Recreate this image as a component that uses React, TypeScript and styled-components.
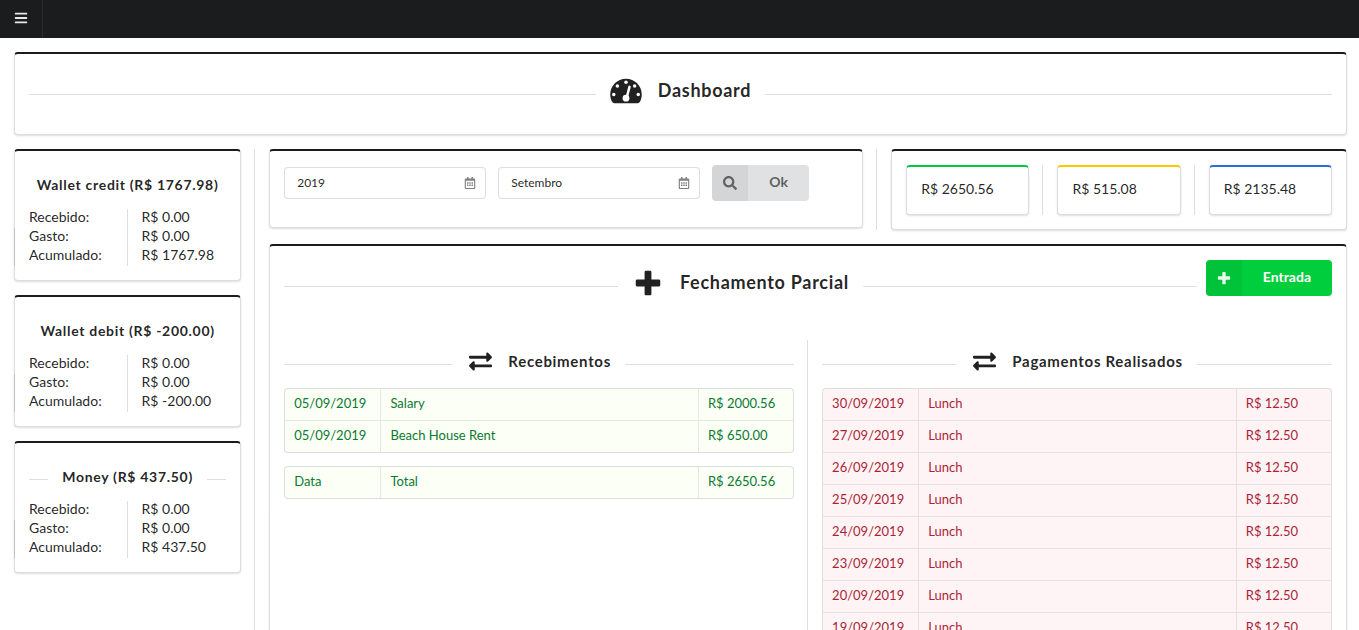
import React from "react";
import styled, { createGlobalStyle, css } from "styled-components";
import { FaBars, FaExchangeAlt, FaRegCalendarAlt, FaSearch } from "react-icons/fa";

const line = "rgba(34, 36, 38, 0.15)";

const GlobalStyle = createGlobalStyle`
  *, *::before, *::after { box-sizing: border-box; }
  body {
    margin: 0;
    background: #fff;
    color: rgba(0, 0, 0, 0.87);
    font-family: Lato, "Open Sans", sans-serif;
    font-size: 14px;
    line-height: 19px;
    overflow-x: hidden;
  }
`;

const Menu = styled.nav`
  display: flex;
  height: 38px;
  background: #1b1c1d;
`;

const MenuButton = styled.button`
  display: flex;
  align-items: center;
  justify-content: center;
  width: 43px;
  padding: 0 0 2px;
  border: 0;
  border-right: 1px solid rgba(255, 255, 255, 0.08);
  background: transparent;
  color: rgba(255, 255, 255, 0.9);
  font-size: 14px;
  cursor: pointer;
`;

const Page = styled.main`
  display: flex;
  flex-direction: column;
  gap: 14px;
  margin-right: -2px;
  padding: 14px 0;
`;

const PageHeader = styled.header`
  padding: 0 14px;
`;

const Segment = styled.section<{ $accent?: string }>`
  padding: 14px;
  border: 1px solid ${line};
  border-top: 2px solid ${(p) => p.$accent ?? "#1b1c1d"};
  border-radius: 4px;
  background: #fff;
  box-shadow: 0 1px 2px 0 ${line};
`;

const Columns = styled.div<{ $template: string; $nested?: boolean }>`
  display: grid;
  grid-template-columns: ${(p) => p.$template};
  margin: 0 ${(p) => (p.$nested ? "-14px" : "0")};
`;

const Column = styled.div<{ $gap?: number }>`
  display: flex;
  flex-direction: column;
  gap: ${(p) => p.$gap ?? 0}px;
  min-width: 0;
  padding: 0 14px;

  &:not(:last-child) {
    border-right: 1px solid ${line};
    padding-right: 13px;
  }
`;

const Value = styled.span`
  display: block;
  padding-bottom: 4px;
  line-height: 15px;
`;

const HeadingText = styled.span`
  display: flex;
  flex: none;
  align-items: center;
  padding: 0 14px;
`;

const headingSizes = {
  large: css`
    height: 52px;
    padding-bottom: 8px;
    &::before, &::after { margin-top: 8px; }
    ${HeadingText} { gap: 16px; font-size: 18px; }
    svg { width: 32px; height: 28px; margin-top: 2px; }
  `,
  medium: css`
    height: 48px;
    padding-bottom: 6px;
    &::before, &::after { margin-top: 6px; }
    ${HeadingText} { gap: 14px; font-size: 15px; }
    svg { width: 27px; height: 23px; }
  `,
  small: css`
    height: 44px;
    padding-bottom: 6px;
    &::before, &::after { margin-top: 6px; }
  `,
};

const Heading = styled.h2<{ $size: keyof typeof headingSizes }>`
  display: flex;
  align-items: center;
  justify-content: center;
  margin: 0;
  font-size: 14px;
  font-weight: 700;
  letter-spacing: 0.05em;
  white-space: nowrap;

  &::before,
  &::after {
    content: "";
    flex: 1;
    height: 1px;
    background: ${line};
  }

  ${(p) => headingSizes[p.$size]}
`;

const WalletStats = styled.div`
  position: relative;

  &::before {
    content: "";
    position: absolute;
    left: -15px;
    bottom: 0;
    width: 1px;
    height: 38px;
    background: ${line};
  }
`;

const FilterForm = styled.form`
  display: flex;
  align-items: center;
  gap: 12px;
  margin-bottom: 12px;
`;

const Field = styled.label`
  position: relative;
  display: flex;
  flex: 0 1 202px;
  min-width: 0;

  svg {
    position: absolute;
    top: 10px;
    right: 10px;
    width: 12px;
    height: 12px;
    color: rgba(0, 0, 0, 0.5);
  }
`;

const TextInput = styled.input`
  width: 100%;
  height: 32px;
  padding: 0 32px 2px 12px;
  border: 1px solid ${line};
  border-radius: 4px;
  background: #fff;
  color: rgba(0, 0, 0, 0.87);
  font: 12px Lato, "Open Sans", sans-serif;
`;

const IconButton = styled.button<{ $green?: boolean }>`
  display: flex;
  flex: none;
  height: 36px;
  padding: 0;
  border: 0;
  border-radius: 4px;
  overflow: hidden;
  background: ${(p) => (p.$green ? "#00ce3d" : "#e0e1e2")};
  color: ${(p) => (p.$green ? "#fff" : "rgba(0, 0, 0, 0.6)")};
  font: 700 14px/34px Lato, "Open Sans", sans-serif;
  cursor: pointer;
`;

const ButtonIcon = styled.span`
  display: flex;
  align-items: center;
  justify-content: center;
  width: 36px;
  height: 36px;
  background: rgba(0, 0, 0, 0.05);

  svg {
    width: 14px;
    height: 14px;
    opacity: 0.9;
  }
`;

const ButtonText = styled.span`
  padding: 0 21px;
`;

const TitleRow = styled.div`
  display: flex;
  align-items: flex-start;
  gap: 9px;
  margin-bottom: 28px;

  ${Heading} { flex: 1; }
`;

const Tables = styled.div`
  display: flex;
  flex-direction: column;
  gap: 13px;
`;

const Table = styled.table<{ $negative?: boolean }>`
  width: 100%;
  border: 1px solid ${line};
  border-radius: 4px;
  border-spacing: 0;
  table-layout: fixed;
  overflow: hidden;
  background: ${(p) => (p.$negative ? "#fff4f5" : "#fcfff5")};
  background-clip: padding-box;
  color: ${(p) => (p.$negative ? "#ac1f36" : "#0a7a32")};
  font-size: 13px;

  col:first-child,
  col:last-child {
    width: calc(100% * 3 / 16);
  }

  td {
    height: 31px;
    padding: 0 9px 4px;
    line-height: 18px;
  }

  td + td { border-left: 1px solid rgba(34, 36, 38, 0.1); }
  tr + tr td { border-top: 1px solid rgba(34, 36, 38, 0.1); height: 32px; }
`;

const wallets = [
  { name: "Wallet credit", balance: "R$ 1767.98" },
  { name: "Wallet debit", balance: "R$ -200.00" },
  { name: "Money", balance: "R$ 437.50" },
];

const totals = [
  { value: "R$ 2650.56", color: "#00c746" },
  { value: "R$ 515.08", color: "#fbc800" },
  { value: "R$ 2135.48", color: "#2b70d6" },
];

const receipts = [
  ["05/09/2019", "Salary", "R$ 2000.56"],
  ["05/09/2019", "Beach House Rent", "R$ 650.00"],
];

const payments = [30, 27, 26, 25, 24, 23, 20, 19].map((day) => [
  `${day}/09/2019`,
  "Lunch",
  "R$ 12.50",
]);

function PlusIcon() {
  return (
    <svg viewBox="0 0 448 512" fill="currentColor" aria-hidden="true">
      <path d="M448 294.2v-76.4c0-13.3-10.7-24-24-24H286.2V56c0-13.3-10.7-24-24-24h-76.4c-13.3 0-24 10.7-24 24v137.8H24c-13.3 0-24 10.7-24 24v76.4c0 13.3 10.7 24 24 24h137.8V456c0 13.3 10.7 24 24 24h76.4c13.3 0 24-10.7 24-24V318.2H424c13.3 0 24-10.7 24-24z" />
    </svg>
  );
}

function GaugeIcon() {
  return (
    <svg viewBox="0 0 576 512" fill="currentColor" aria-hidden="true">
      <path d="M76 480a48 48 0 0 1-43-26C12 414 0 369 0 320 0 161 129 32 288 32s288 129 288 288c0 49-12 94-33 134a48 48 0 0 1-43 26H76z" />
      <g fill="#fff">
        <circle cx="64" cy="320" r="32" />
        <circle cx="130" cy="166" r="32" />
        <circle cx="288" cy="98" r="32" />
        <circle cx="446" cy="166" r="32" />
        <circle cx="512" cy="320" r="32" />
        <circle cx="288" cy="388" r="62" />
      </g>
      <path d="M352 180L300 380" fill="none" stroke="#fff" strokeWidth="46" strokeLinecap="round" />
    </svg>
  );
}

function Entries({ rows, negative, label }: { rows: string[][]; negative?: boolean; label: string }) {
  return (
    <Table $negative={negative} aria-label={label}>
      <colgroup>
        <col />
        <col />
        <col />
      </colgroup>
      <tbody>
        {rows.map((row, i) => (
          <tr key={i}>
            {row.map((cell, j) => (
              <td key={j}>{cell}</td>
            ))}
          </tr>
        ))}
      </tbody>
    </Table>
  );
}

function Wallet({ name, balance }: { name: string; balance: string }) {
  return (
    <Segment>
      <Heading $size="small">
        <HeadingText>{`${name} (${balance})`}</HeadingText>
      </Heading>
      <WalletStats>
        <Columns $template="1fr 1fr" $nested>
          <Column>
            <Value>Recebido:</Value>
            <Value>Gasto:</Value>
            <Value>Acumulado:</Value>
          </Column>
          <Column>
            <Value>R$ 0.00</Value>
            <Value>R$ 0.00</Value>
            <Value>{balance}</Value>
          </Column>
        </Columns>
      </WalletStats>
    </Segment>
  );
}

export default function App() {
  return (
    <>
      <GlobalStyle />
      <Menu>
        <MenuButton type="button" aria-label="Menu">
          <FaBars />
        </MenuButton>
      </Menu>
      <Page>
        <PageHeader>
          <Segment>
            <Heading as="h1" $size="large">
              <HeadingText>
                <GaugeIcon />
                Dashboard
              </HeadingText>
            </Heading>
          </Segment>
        </PageHeader>
        <Columns $template="minmax(0, 3fr) minmax(0, 13fr)">
          <Column $gap={14}>
            {wallets.map((wallet) => (
              <Wallet key={wallet.name} {...wallet} />
            ))}
          </Column>
          <Column $gap={14}>
            <Columns $template="minmax(0, 9fr) minmax(0, 7fr)" $nested>
              <Column>
                <Segment>
                  <FilterForm onSubmit={(e) => e.preventDefault()}>
                    <Field>
                      <TextInput aria-label="Ano" defaultValue="2019" />
                      <FaRegCalendarAlt />
                    </Field>
                    <Field>
                      <TextInput aria-label="Mês" defaultValue="Setembro" />
                      <FaRegCalendarAlt />
                    </Field>
                    <IconButton type="submit">
                      <ButtonIcon>
                        <FaSearch />
                      </ButtonIcon>
                      <ButtonText>Ok</ButtonText>
                    </IconButton>
                  </FilterForm>
                </Segment>
              </Column>
              <Column>
                <Segment>
                  <Columns $template="repeat(3, minmax(0, 1fr))" $nested>
                    {totals.map((total) => (
                      <Column key={total.value}>
                        <Segment as="div" $accent={total.color}>
                          <Value>{total.value}</Value>
                        </Segment>
                      </Column>
                    ))}
                  </Columns>
                </Segment>
              </Column>
            </Columns>
            <Segment>
              <TitleRow>
                <Heading $size="large">
                  <HeadingText>
                    <PlusIcon />
                    Fechamento Parcial
                  </HeadingText>
                </Heading>
                <IconButton type="button" $green>
                  <ButtonIcon>
                    <PlusIcon />
                  </ButtonIcon>
                  <ButtonText>Entrada</ButtonText>
                </IconButton>
              </TitleRow>
              <Columns $template="minmax(0, 1fr) minmax(0, 1fr)" $nested>
                <Column>
                  <Heading as="h3" $size="medium">
                    <HeadingText>
                      <FaExchangeAlt />
                      Recebimentos
                    </HeadingText>
                  </Heading>
                  <Tables>
                    <Entries label="Recebimentos" rows={receipts} />
                    <Entries label="Total" rows={[["Data", "Total", "R$ 2650.56"]]} />
                  </Tables>
                </Column>
                <Column>
                  <Heading as="h3" $size="medium">
                    <HeadingText>
                      <FaExchangeAlt />
                      Pagamentos Realisados
                    </HeadingText>
                  </Heading>
                  <Entries label="Pagamentos Realisados" rows={payments} negative />
                </Column>
              </Columns>
            </Segment>
          </Column>
        </Columns>
      </Page>
    </>
  );
}
